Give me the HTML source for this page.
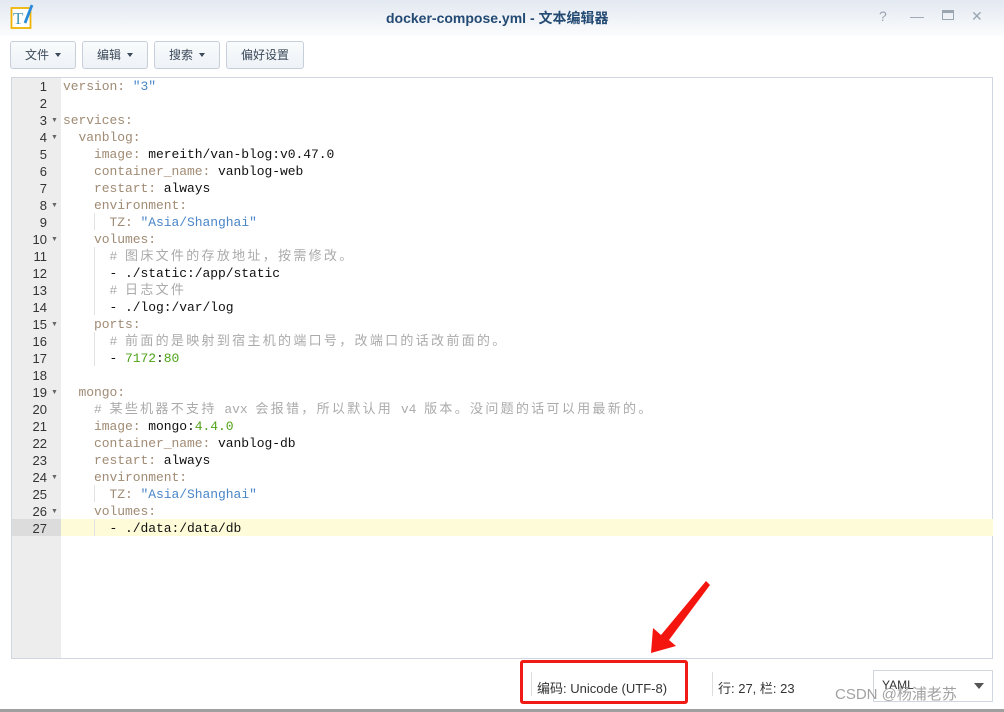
<!DOCTYPE html>
<html><head><meta charset="utf-8"><style>
*{margin:0;padding:0;box-sizing:border-box}
body{width:1004px;height:712px;overflow:hidden;background:#fff;font-family:"Liberation Sans","Noto Sans CJK SC",sans-serif;position:relative}
.title{position:absolute;left:0;top:0;width:1004px;height:36px;background:linear-gradient(#e3e9f1,#fbfcfd)}
.tt{position:absolute;left:386px;top:8px;font-size:14px;font-weight:bold;color:#234a73}
.ctl{position:absolute;top:8px;font-size:14px;color:#9aa5b2}
.btn{position:absolute;top:41px;height:28px;border:1px solid #c7d0da;border-radius:3px;background:linear-gradient(#f9fbfc,#eef2f6);font-size:12px;color:#3b4a5a;line-height:26px;text-align:center}
.caret{display:inline-block;width:0;height:0;border-left:3.5px solid transparent;border-right:3.5px solid transparent;border-top:4px solid #3b4a5a;margin-left:6px;vertical-align:2px}
.ed{position:absolute;left:11px;top:77px;width:982px;height:582px;border:1px solid #cfd8e0;background:#fff}
.gut{position:absolute;left:0;top:0;width:49px;height:580px;background:#ededed}
.hl{position:absolute;left:49px;top:441px;width:932px;height:17px;background:#fefbd8}
.hlg{position:absolute;left:0;top:441px;width:49px;height:17px;background:#dcdcdc}
.ln{position:absolute;left:0;width:35px;text-align:right;font:13px "Liberation Sans",sans-serif;color:#333;line-height:17px}
.fd{position:absolute;left:39px;font-size:7px;color:#666;line-height:17px}
.cl{position:absolute;left:51px;font:13px "Liberation Mono","Noto Sans CJK SC",monospace;letter-spacing:-0.05px;line-height:17px;white-space:pre;color:#111}
.k{color:#a08b74}.s{color:#4a86c8}.c{color:#aaa}.n{color:#4fa318}
.z{letter-spacing:2.3px}
.gd{position:absolute;width:1px;background:#e2e2e2}
.sb{position:absolute;font-size:13px;color:#333;top:678px}
</style></head><body>
<div class="title">
<svg style="position:absolute;left:10px;top:3px" width="26" height="26"><rect x="1.5" y="5" width="19" height="20" fill="#fff" stroke="#f0b400" stroke-width="1.8"/><text x="3" y="21" font-size="17" font-family="Liberation Serif" fill="#4a9db8">T</text><path d="M22 2 L15 20" stroke="#2a8bd8" stroke-width="2.8"/></svg>
<div class="tt">docker-compose.yml - 文本编辑器</div>
<div class="ctl" style="left:879px">?</div><div class="ctl" style="left:910px">—</div>
<div class="ctl" style="left:942px;top:10px;width:12px;height:10px;border:1.5px solid #9aa5b2;border-top-width:3px"></div>
<div class="ctl" style="left:971px">✕</div>
</div>
<div class="btn" style="left:10px;width:66px">文件<span class="caret"></span></div>
<div class="btn" style="left:82px;width:66px">编辑<span class="caret"></span></div>
<div class="btn" style="left:154px;width:66px">搜索<span class="caret"></span></div>
<div class="btn" style="left:226px;width:78px">偏好设置</div>
<div class="ed">
<div class="gut"></div><div class="hl"></div><div class="hlg"></div>
<div class="gd" style="left:82px;top:135px;height:17px"></div>
<div class="gd" style="left:82px;top:169px;height:68px"></div>
<div class="gd" style="left:82px;top:254px;height:34px"></div>
<div class="gd" style="left:82px;top:407px;height:17px"></div>
<div class="gd" style="left:82px;top:441px;height:17px"></div>
<div id="L"></div>
</div>
<svg style="position:absolute;left:0;top:0" width="1004" height="712"><polygon points="706,581 710,585 669,640 676,646 651,653 653,628 661,635" fill="#f5150f"/></svg>
<div style="position:absolute;left:520px;top:660px;width:168px;height:44px;border:3px solid #f01b14;border-radius:3px"></div>
<div style="position:absolute;left:531px;top:672px;width:1px;height:24px;background:#ddd"></div>
<div style="position:absolute;left:712px;top:672px;width:1px;height:24px;background:#ddd"></div>
<div class="sb" style="left:537px">编码: Unicode (UTF-8)</div>
<div class="sb" style="left:718px">行: 27, 栏: 23</div>
<div style="position:absolute;left:873px;top:670px;width:120px;height:32px;border:1px solid #cfd8e0;font-size:12px;color:#333;padding:7px 8px">YAML<span style="position:absolute;right:8px;top:12px;border-left:5px solid transparent;border-right:5px solid transparent;border-top:6px solid #555"></span></div>
<div style="position:absolute;left:835px;top:683px;font-size:15px;color:rgba(130,130,130,.75)">CSDN @杨浦老苏</div>
<div style="position:absolute;left:0;top:709px;width:1004px;height:3px;background:#a0a0a0"></div>
<script>
var L=[
'<span class="k">version:</span> <span class="s">"3"</span>','',
'<span class="k">services:</span>',
'  <span class="k">vanblog:</span>',
'    <span class="k">image:</span> mereith/van-blog:v0.47.0',
'    <span class="k">container_name:</span> vanblog-web',
'    <span class="k">restart:</span> always',
'    <span class="k">environment:</span>',
'      <span class="k">TZ:</span> <span class="s">"Asia/Shanghai"</span>',
'    <span class="k">volumes:</span>',
'      <span class="c"># <span class="z">图床文件的存放地址，按需修改。</span></span>',
'      - ./static:/app/static',
'      <span class="c"># <span class="z">日志文件</span></span>',
'      - ./log:/var/log',
'    <span class="k">ports:</span>',
'      <span class="c"># <span class="z">前面的是映射到宿主机的端口号，改端口的话改前面的。</span></span>',
'      - <span class="n">7172</span>:<span class="n">80</span>','',
'  <span class="k">mongo:</span>',
'    <span class="c"># <span class="z">某些机器不支持</span> avx <span class="z">会报错，所以默认用</span> v4 <span class="z">版本。没问题的话可以用最新的。</span></span>',
'    <span class="k">image:</span> mongo:<span class="n">4.4.0</span>',
'    <span class="k">container_name:</span> vanblog-db',
'    <span class="k">restart:</span> always',
'    <span class="k">environment:</span>',
'      <span class="k">TZ:</span> <span class="s">"Asia/Shanghai"</span>',
'    <span class="k">volumes:</span>',
'      - ./data:/data/db'];
var f=[3,4,8,10,15,19,24,26],h='';
L.forEach(function(t,i){var y=i*17;h+='<div class="ln" style="top:'+y+'px">'+(i+1)+'</div>';
if(f.indexOf(i+1)>=0)h+='<div class="fd" style="top:'+y+'px">▼</div>';
h+='<div class="cl" style="top:'+y+'px">'+t+'</div>';});
document.getElementById('L').innerHTML=h;
</script>
</body></html>
